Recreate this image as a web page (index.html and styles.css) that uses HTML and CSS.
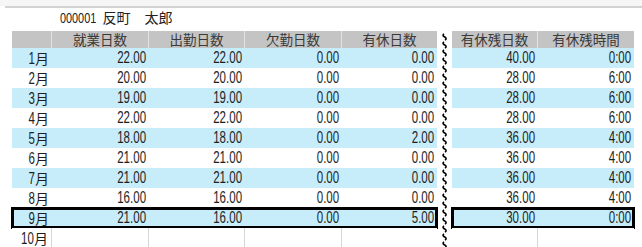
FILE: index.html
```html
<!DOCTYPE html>
<html lang="ja">
<head>
<meta charset="utf-8">
<link rel="stylesheet" href="styles.css">
</head>
<body>
<div class="topstrip"></div>
<div class="topline"></div>
<div class="title"><span class="tn">000001</span> 反町　太郎</div>
<div class="grid">
  <div class="tbl left">
    <div class="row head"><div class="c">&nbsp;</div><div class="c">就業日数</div><div class="c">出勤日数</div><div class="c">欠勤日数</div><div class="c">有休日数</div></div>
    <div class="row odd"><div class="c"><span class="n">1</span><span class="m">月</span></div><div class="c"><span class="n">22.00</span></div><div class="c"><span class="n">22.00</span></div><div class="c"><span class="n">0.00</span></div><div class="c"><span class="n">0.00</span></div></div>
    <div class="row"><div class="c"><span class="n">2</span><span class="m">月</span></div><div class="c"><span class="n">20.00</span></div><div class="c"><span class="n">20.00</span></div><div class="c"><span class="n">0.00</span></div><div class="c"><span class="n">0.00</span></div></div>
    <div class="row odd"><div class="c"><span class="n">3</span><span class="m">月</span></div><div class="c"><span class="n">19.00</span></div><div class="c"><span class="n">19.00</span></div><div class="c"><span class="n">0.00</span></div><div class="c"><span class="n">0.00</span></div></div>
    <div class="row"><div class="c"><span class="n">4</span><span class="m">月</span></div><div class="c"><span class="n">22.00</span></div><div class="c"><span class="n">22.00</span></div><div class="c"><span class="n">0.00</span></div><div class="c"><span class="n">0.00</span></div></div>
    <div class="row odd"><div class="c"><span class="n">5</span><span class="m">月</span></div><div class="c"><span class="n">18.00</span></div><div class="c"><span class="n">18.00</span></div><div class="c"><span class="n">0.00</span></div><div class="c"><span class="n">2.00</span></div></div>
    <div class="row"><div class="c"><span class="n">6</span><span class="m">月</span></div><div class="c"><span class="n">21.00</span></div><div class="c"><span class="n">21.00</span></div><div class="c"><span class="n">0.00</span></div><div class="c"><span class="n">0.00</span></div></div>
    <div class="row odd"><div class="c"><span class="n">7</span><span class="m">月</span></div><div class="c"><span class="n">21.00</span></div><div class="c"><span class="n">21.00</span></div><div class="c"><span class="n">0.00</span></div><div class="c"><span class="n">0.00</span></div></div>
    <div class="row"><div class="c"><span class="n">8</span><span class="m">月</span></div><div class="c"><span class="n">16.00</span></div><div class="c"><span class="n">16.00</span></div><div class="c"><span class="n">0.00</span></div><div class="c"><span class="n">0.00</span></div></div>
    <div class="row odd sel"><div class="c"><span class="n">9</span><span class="m">月</span></div><div class="c"><span class="n">21.00</span></div><div class="c"><span class="n">16.00</span></div><div class="c"><span class="n">0.00</span></div><div class="c"><span class="n">5.00</span></div></div>
    <div class="row empty"><div class="c"><span class="n">10</span><span class="m">月</span></div><div class="c"></div><div class="c"></div><div class="c"></div><div class="c"></div></div>
  </div>
  <div class="wave">
    <svg width="15" height="216" viewBox="0 0 15 216">
      <defs>
        <pattern id="wv" x="0" y="2" width="15" height="8" patternUnits="userSpaceOnUse">
          <path d="M7 0.8 C5.2 2.2 6.2 3.2 7.8 4 C9.4 4.8 9.6 6 8 7.2" stroke="#000" stroke-width="1.6" fill="none"/>
        </pattern>
      </defs>
      <rect x="0" y="2" width="15" height="214" fill="url(#wv)"/>
    </svg>
  </div>
  <div class="tbl right">
    <div class="row head"><div class="c">有休残日数</div><div class="c">有休残時間</div></div>
    <div class="row odd"><div class="c"><span class="n">40.00</span></div><div class="c"><span class="n">0:00</span></div></div>
    <div class="row"><div class="c"><span class="n">28.00</span></div><div class="c"><span class="n">6:00</span></div></div>
    <div class="row odd"><div class="c"><span class="n">28.00</span></div><div class="c"><span class="n">6:00</span></div></div>
    <div class="row"><div class="c"><span class="n">28.00</span></div><div class="c"><span class="n">6:00</span></div></div>
    <div class="row odd"><div class="c"><span class="n">36.00</span></div><div class="c"><span class="n">4:00</span></div></div>
    <div class="row"><div class="c"><span class="n">36.00</span></div><div class="c"><span class="n">4:00</span></div></div>
    <div class="row odd"><div class="c"><span class="n">36.00</span></div><div class="c"><span class="n">4:00</span></div></div>
    <div class="row"><div class="c"><span class="n">36.00</span></div><div class="c"><span class="n">4:00</span></div></div>
    <div class="row odd sel"><div class="c"><span class="n">30.00</span></div><div class="c"><span class="n">0:00</span></div></div>
    <div class="row empty"><div class="c"></div><div class="c"></div></div>
  </div>
</div>
</body>
</html>
```

FILE: styles.css
```css
html, body {
  margin: 0;
  padding: 0;
}
body {
  width: 642px;
  height: 247px;
  overflow: hidden;
  background: #ffffff;
  font-family: "Liberation Sans", "Noto Sans CJK JP", sans-serif;
  color: #222;
}
.topstrip {
  height: 6px;
  background: #f6f6f6;
}
.topline {
  margin-left: 5px;
  height: 2px;
  background: #d2d2d2;
}
.title {
  height: 23px;
  line-height: 19px;
  padding-left: 60px;
  font-size: 14px;
  color: #222;
  white-space: nowrap;
}
.tn {
  display: inline-block;
  font-size: 15.5px;
  transform: scaleX(0.7);
  transform-origin: left center;
  margin-right: -13px;
}
.grid {
  display: flex;
  padding-left: 12px;
}
.tbl {
  display: flex;
  flex-direction: column;
}
.left .row {
  display: grid;
  grid-template-columns: 40px 97px 96px 97px 95px;
}
.right .row {
  display: grid;
  grid-template-columns: 86px 96px;
}
.row {
  height: 20px;
  background: #ffffff;
}
.row .c {
  text-align: right;
  padding-right: 3px;
  font-size: 16px;
  line-height: 20px;
  white-space: nowrap;
}
.n {
  display: inline-block;
  transform: scaleX(0.72);
  transform-origin: right center;
  color: #1e1e1e;
}
.m {
  font-family: "Noto Sans CJK JP", sans-serif;
  font-size: 14px;
  color: #1e1e1e;
}
.row.odd {
  background: #c7edfb;
}
.row.head {
  height: 17px;
  background: #c4c4c4;
}
.row.head .c {
  text-align: center;
  padding-right: 0;
  font-family: "Noto Sans CJK JP", sans-serif;
  font-size: 13.5px;
  line-height: 17px;
  color: #3a3a3a;
  border-right: 1px solid #e2e2e2;
}
.row.head .c:last-child {
  border-right: none;
}
.row.empty .c {
  border-right: 1px solid #d6d6d6;
}
.row.empty .c:last-child {
  border-right: none;
}
.row.sel {
  outline: 3px solid #000;
  outline-offset: -2px;
}
.wave {
  width: 15px;
  height: 216px;
}
.wave svg {
  display: block;
}
```
